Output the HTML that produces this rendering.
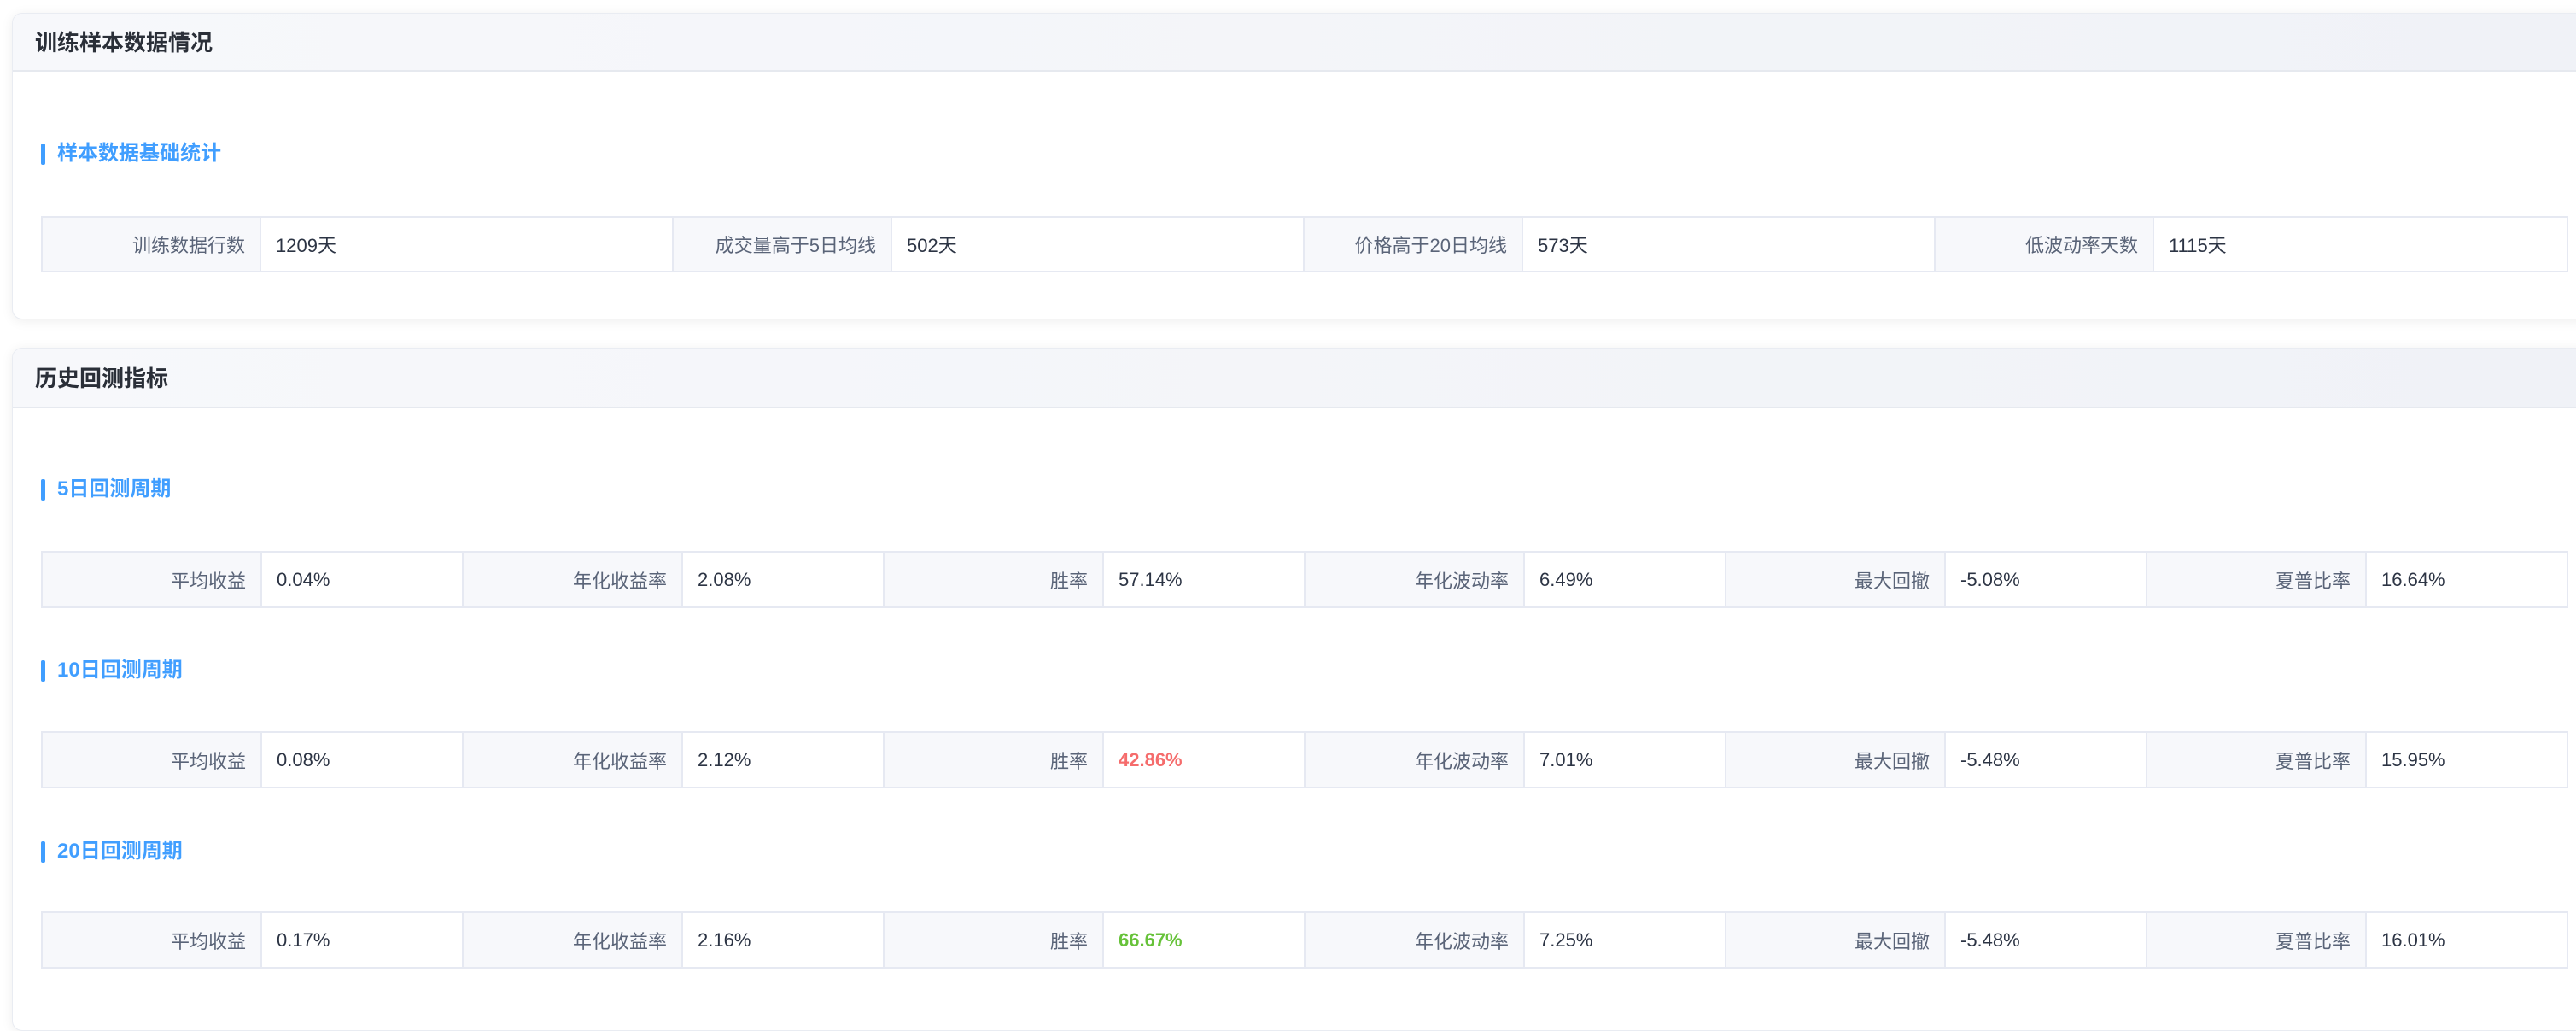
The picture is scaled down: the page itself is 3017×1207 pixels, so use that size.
<!DOCTYPE html>
<html><head><meta charset="utf-8"><style>
*{box-sizing:border-box;margin:0;padding:0}
body{width:3017px;height:1173px;overflow:hidden;background:#fff;font-family:"Liberation Sans","Noto Sans CJK SC",sans-serif;position:relative}
.card{position:absolute;left:14px;right:-30px;background:#fff;border:1px solid #e9ecf2;border-radius:12px;box-shadow:0 2px 14px rgba(0,0,0,0.07);overflow:hidden}
.hd{position:absolute;left:0;right:0;top:0;height:68px;background:linear-gradient(90deg,#f7f8fb,#f0f2f7);border-bottom:2px solid #e6e9ef}
.hd span{position:absolute;left:26px;top:0;line-height:68px;font-size:26px;font-weight:bold;color:#2a2f38}
.st{position:absolute;left:33px;height:25px;border-left:5px solid #409eff;border-radius:2px}
.st span{position:absolute;left:14px;top:-6px;white-space:nowrap;font-size:24px;line-height:36px;font-weight:bold;color:#409eff}
table{position:absolute;left:33px;width:2958px;border-collapse:collapse;table-layout:fixed}
td{border:2px solid #e6e9f2;font-size:22px;white-space:nowrap}
td.l{background:#f7f8fb;color:#5a6478;text-align:right;padding-right:17px}
td.v{color:#2c3444;padding-left:17px}
td.r{color:#f56c6c;font-weight:bold}td.g{color:#67c23a;font-weight:bold}
</style></head><body>
<div class="card" style="top:15px;height:359px">
 <div class="hd"><span>训练样本数据情况</span></div>
 <div class="st" style="top:152px"><span>样本数据基础统计</span></div>
 <table style="top:237px;height:66px"><colgroup><col style="width:256px"><col style="width:483px"><col style="width:256px"><col style="width:483px"><col style="width:256px"><col style="width:483px"><col style="width:256px"><col style="width:485px"></colgroup>
 <tr><td class="l">训练数据行数</td><td class="v">1209天</td><td class="l">成交量高于5日均线</td><td class="v">502天</td><td class="l">价格高于20日均线</td><td class="v">573天</td><td class="l">低波动率天数</td><td class="v">1115天</td></tr></table>
</div>
<div class="card" style="top:407px;height:800px">
 <div class="hd" style="height:70px"><span style="line-height:70px">历史回测指标</span></div>
 <div class="st" style="top:153px"><span>5日回测周期</span></div>
 <table style="top:237px;height:67px"><colgroup><col style="width:257px"><col style="width:236px"><col style="width:257px"><col style="width:236px"><col style="width:257px"><col style="width:236px"><col style="width:257px"><col style="width:236px"><col style="width:257px"><col style="width:236px"><col style="width:257px"><col style="width:236px"></colgroup>
 <tr><td class="l">平均收益</td><td class="v">0.04%</td><td class="l">年化收益率</td><td class="v">2.08%</td><td class="l">胜率</td><td class="v">57.14%</td><td class="l">年化波动率</td><td class="v">6.49%</td><td class="l">最大回撤</td><td class="v">-5.08%</td><td class="l">夏普比率</td><td class="v">16.64%</td></tr></table>
 <div class="st" style="top:365px"><span>10日回测周期</span></div>
 <table style="top:448px;height:67px"><colgroup><col style="width:257px"><col style="width:236px"><col style="width:257px"><col style="width:236px"><col style="width:257px"><col style="width:236px"><col style="width:257px"><col style="width:236px"><col style="width:257px"><col style="width:236px"><col style="width:257px"><col style="width:236px"></colgroup>
 <tr><td class="l">平均收益</td><td class="v">0.08%</td><td class="l">年化收益率</td><td class="v">2.12%</td><td class="l">胜率</td><td class="v r">42.86%</td><td class="l">年化波动率</td><td class="v">7.01%</td><td class="l">最大回撤</td><td class="v">-5.48%</td><td class="l">夏普比率</td><td class="v">15.95%</td></tr></table>
 <div class="st" style="top:577px"><span>20日回测周期</span></div>
 <table style="top:659px;height:67px"><colgroup><col style="width:257px"><col style="width:236px"><col style="width:257px"><col style="width:236px"><col style="width:257px"><col style="width:236px"><col style="width:257px"><col style="width:236px"><col style="width:257px"><col style="width:236px"><col style="width:257px"><col style="width:236px"></colgroup>
 <tr><td class="l">平均收益</td><td class="v">0.17%</td><td class="l">年化收益率</td><td class="v">2.16%</td><td class="l">胜率</td><td class="v g">66.67%</td><td class="l">年化波动率</td><td class="v">7.25%</td><td class="l">最大回撤</td><td class="v">-5.48%</td><td class="l">夏普比率</td><td class="v">16.01%</td></tr></table>
</div>
</body></html>
